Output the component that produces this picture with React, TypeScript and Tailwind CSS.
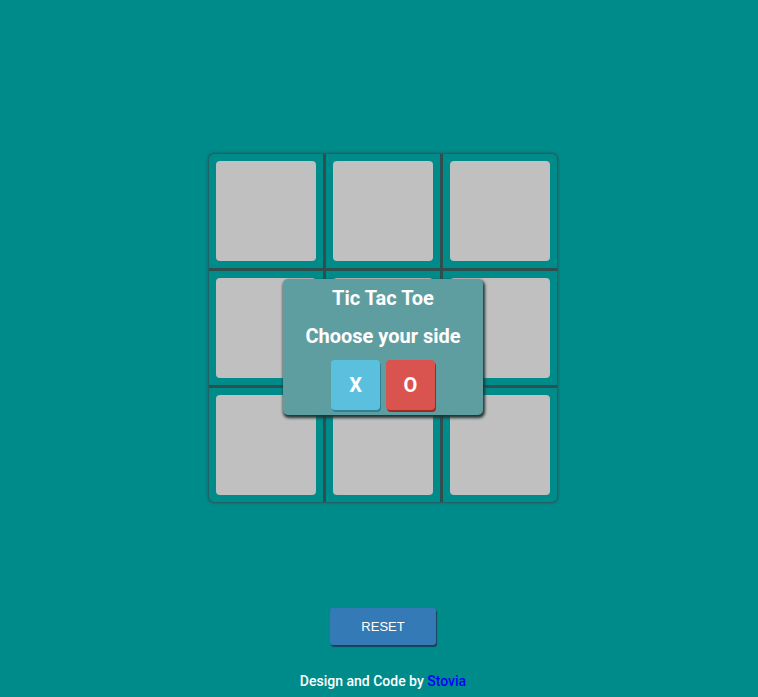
import { useState } from "react";

type Side = "X" | "O" | null;

const font = { fontFamily: "Roboto, 'Noto Sans', sans-serif" };

function Cell({ value }: { value: Side }) {
  return (
    <div className="w-[114px] h-[114px] bg-[#008b8b] flex items-center justify-center">
      <div className="w-[100px] h-[100px] bg-[#c0c0c0] rounded-[4px] flex items-center justify-center text-5xl font-bold text-white">
        {value}
      </div>
    </div>
  );
}

function Chooser({ onPick }: { onPick: (s: Side) => void }) {
  return (
    <div className="absolute left-[74px] top-[125px] w-[200px] h-[136px] bg-[#5f9ea0] rounded-[5px] shadow-[1px_2px_3px_1px_#1f3535] flex flex-col items-center pt-[5px] text-white">
      <h3 className="text-[20px] leading-[28px] font-bold">Tic Tac Toe</h3>
      <h3 className="text-[20px] leading-[28px] font-bold mt-[10px]">
        Choose your side
      </h3>
      <div className="flex gap-[6px] mt-[10px]">
        <button
          onClick={() => onPick("X")}
          className="w-[49px] h-[50px] bg-[#5bc0de] rounded-[4px] shadow-[1px_2px_0_#2f7f97] text-[20px] leading-[20px] font-bold text-white"
        >
          X
        </button>
        <button
          onClick={() => onPick("O")}
          className="w-[49px] h-[50px] bg-[#d9534f] rounded-[4px] shadow-[1px_2px_0_#9b2a25] text-[20px] leading-[20px] font-bold text-white"
        >
          O
        </button>
      </div>
    </div>
  );
}

export default function App() {
  const [board, setBoard] = useState<Side[]>(Array(9).fill(null));
  const [side, setSide] = useState<Side>(null);

  function reset() {
    setBoard(Array(9).fill(null));
    setSide(null);
  }

  return (
    <div
      className="min-h-screen w-full bg-[#008b8b] flex flex-col items-center pl-2 pt-[154px]"
      style={font}
    >
      {/* board */}
      <div className="relative">
        <div className="grid grid-cols-3 gap-[3px] bg-[#2f4f4f] rounded-[5px] overflow-hidden shadow-[0_0_3px_1px_#2f4f4f]">
          {board.map((v, i) => (
            <Cell key={i} value={v} />
          ))}
        </div>
        {!side && <Chooser onPick={setSide} />}
      </div>

      <button
        onClick={reset}
        className="mt-[106px] w-[106px] h-[37px] bg-[#337ab7] rounded-[3px] shadow-[1px_2px_1px_#1d3c5c] text-white text-[13px]"
        style={{ fontFamily: "'Liberation Sans', Arial, sans-serif" }}
      >
        RESET
      </button>

      <p className="mt-[26px] text-[14px] leading-[20px] font-medium text-white">
        Design and Code by <span className="text-[#0000ff]">Stovia</span>
      </p>
    </div>
  );
}
